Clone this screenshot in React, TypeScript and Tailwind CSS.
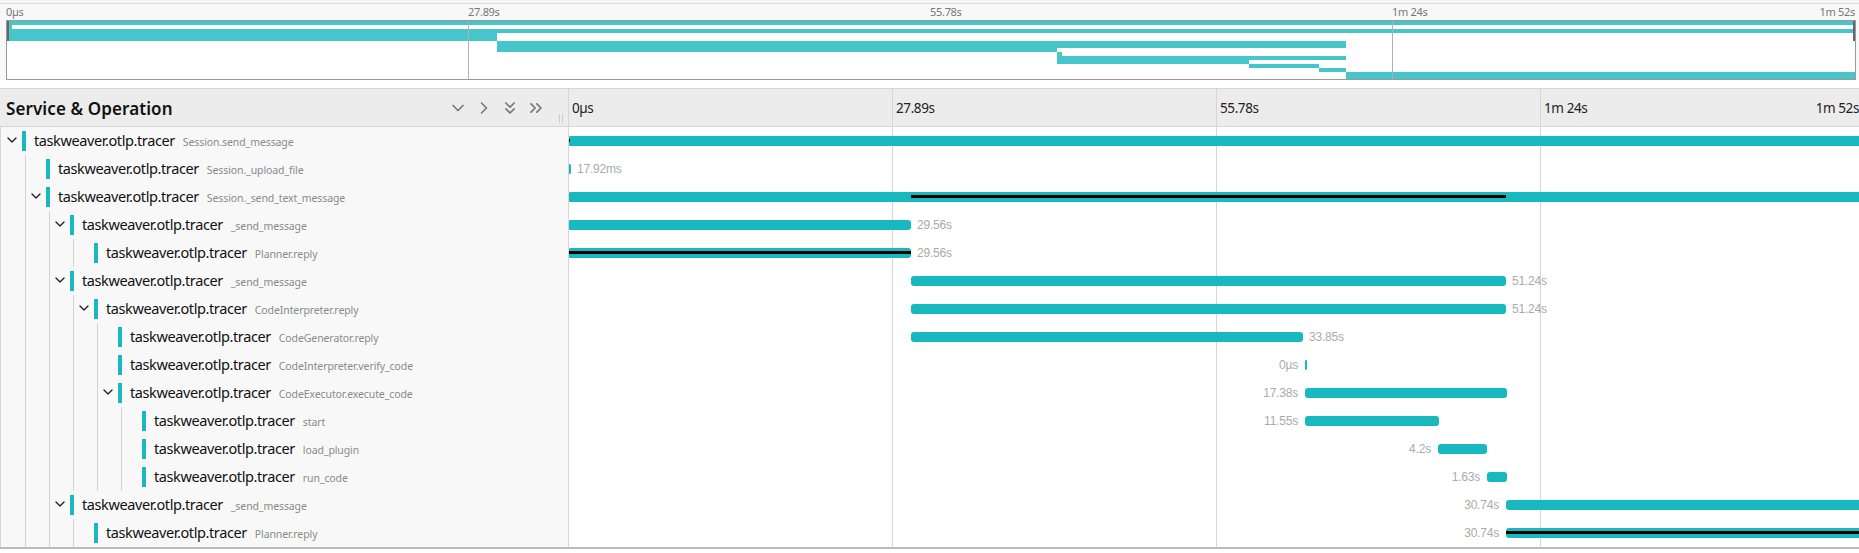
import React from 'react';
import { ChevronDown, ChevronRight, ChevronsDown, ChevronsRight } from 'lucide-react';

interface Span {
    depth: number;
    op: string;
    parent?: boolean;
    start: number;
    end: number;
    label?: string;
    labelLeft?: boolean;
    black?: [number, number];
}

// start / end are page x positions of the bar
const spans: Span[] = [
    { depth: 0, op: 'Session.send_message', parent: true, start: 568, end: 1870, black: [568, 570] },
    { depth: 1, op: 'Session._upload_file', start: 568, end: 571, label: '17.92ms' },
    { depth: 1, op: 'Session._send_text_message', parent: true, start: 568, end: 1870, black: [911, 1506] },
    { depth: 2, op: '_send_message', parent: true, start: 568, end: 911, label: '29.56s' },
    { depth: 3, op: 'Planner.reply', start: 568, end: 911, label: '29.56s', black: [568, 911] },
    { depth: 2, op: '_send_message', parent: true, start: 911, end: 1506, label: '51.24s' },
    { depth: 3, op: 'CodeInterpreter.reply', parent: true, start: 911, end: 1506, label: '51.24s' },
    { depth: 4, op: 'CodeGenerator.reply', start: 911, end: 1303, label: '33.85s' },
    { depth: 4, op: 'CodeInterpreter.verify_code', start: 1305, end: 1307, label: '0µs', labelLeft: true },
    { depth: 4, op: 'CodeExecutor.execute_code', parent: true, start: 1305, end: 1507, label: '17.38s', labelLeft: true },
    { depth: 5, op: 'start', start: 1305, end: 1439, label: '11.55s', labelLeft: true },
    { depth: 5, op: 'load_plugin', start: 1438, end: 1487, label: '4.2s', labelLeft: true },
    { depth: 5, op: 'run_code', start: 1487, end: 1507, label: '1.63s', labelLeft: true },
    { depth: 2, op: '_send_message', parent: true, start: 1506, end: 1870, label: '30.74s', labelLeft: true },
    { depth: 3, op: 'Planner.reply', start: 1506, end: 1870, label: '30.74s', labelLeft: true, black: [1506, 1870] },
];

// minimap bars in svg coords: row index, x1, x2
const miniBars: [number, number, number][] = [
    [0, 0, 1849],
    [1, 0, 5],
    [2, 0, 1849],
    [3, 0, 490],
    [4, 0, 490],
    [5, 490, 1340],
    [6, 490, 1340],
    [7, 490, 1051],
    [8, 1051, 1056],
    [9, 1051, 1340],
    [10, 1051, 1243],
    [11, 1243, 1313],
    [12, 1313, 1340],
    [13, 1340, 1849],
    [14, 1340, 1849],
];

const TimelineOrigin = 569;

const Minimap = () => (
    <svg className="block w-full h-full" viewBox="0 0 1849 58" preserveAspectRatio="none" shapeRendering="crispEdges">
        {miniBars.map(([row, x1, x2], i) => (
            <rect key={i} x={x1} y={row * 3.9} width={x2 - x1} height={3.9} fill="#46c6cb" />
        ))}
        <rect x={461} y={0} width={1} height={58} fill="#b0b0b0" />
        <rect x={924} y={0} width={1} height={58} fill="#a6a6a6" />
        <rect x={1386} y={0} width={1} height={58} fill="#b0b0b0" />
        <rect x={0} y={0} width={2} height={20} fill="#666" />
        <rect x={1847} y={0} width={2} height={20} fill="#666" />
    </svg>
);

const SpanName = ({ span }: { span: Span }) => (
    <div className="flex h-7 pl-[1px]">
        {Array.from({ length: span.depth }).map((_, i) => (
            <div key={i} className="w-6 h-full shrink-0 border-r border-[#d4d4d4]" />
        ))}
        <div className="w-5 shrink-0 flex items-center justify-center pr-[1px] pb-[3px]">
            {span.parent && <ChevronDown className="w-4 h-4 text-[#222]" strokeWidth={2} />}
        </div>
        <div className="w-1 h-5 my-1 shrink-0 bg-[#17b8be]" />
        <div className="ml-2 flex items-baseline whitespace-nowrap leading-[27px]">
            <span className="text-[14.5px] text-[#111] tracking-[-0.4px]">taskweaver.otlp.tracer</span>
            <span className="ml-2 text-[10.5px] text-[#8a8a8a] tracking-[-0.1px]">{span.op}</span>
        </div>
    </div>
);

const SpanBar = ({ span }: { span: Span }) => {
    const left = span.start - TimelineOrigin;
    const width = span.end - span.start;
    return (
        <div className="relative h-7 font-['Liberation_Sans',sans-serif]">
            <div className="absolute top-[9px] h-[10px] bg-[#17b8be] rounded-[3px] overflow-hidden" style={{ left, width }}>
                {span.black && (
                    <div
                        className="absolute top-[3px] h-[3px] bg-black"
                        style={{ left: span.black[0] - span.start, width: span.black[1] - span.black[0] }}
                    />
                )}
            </div>
            {span.label && !span.labelLeft && (
                <span className="absolute top-[7px] text-xs tracking-[-0.2px] text-[#aaa] leading-[14px]" style={{ left: span.end - TimelineOrigin + 6 }}>
                    {span.label}
                </span>
            )}
            {span.label && span.labelLeft && (
                <span className="absolute top-[7px] text-xs tracking-[-0.2px] text-[#aaa] leading-[14px]" style={{ right: 1859 - span.start + 7 }}>
                    {span.label}
                </span>
            )}
        </div>
    );
};

const App: React.FC = () => {
    return (
        <div className="w-[1859px] h-[553px] overflow-hidden bg-white font-['Noto_Sans',sans-serif]">
            <div className="h-1 bg-[#f3f3f3] border-b border-[#ddd]" />
            <div className="bg-[#f8f8f8]">
                <div className="flex h-4 pl-[6px] pr-[4px] text-[11px] leading-[16px] text-[#777] tracking-[-0.3px]">
                    <div className="w-[462px]">0µs</div>
                    <div className="w-[462px]">27.89s</div>
                    <div className="w-[462px]">55.78s</div>
                    <div className="flex-1 flex justify-between">
                        <span>1m 24s</span>
                        <span>1m 52s</span>
                    </div>
                </div>
                <div className="ml-[6px] mr-[3px] h-[60px] bg-white border border-[#999]">
                    <Minimap />
                </div>
            </div>

            <div className="h-2" />

            <div className="flex h-[39px] bg-[#ececec] border-t border-b border-[#d6d6d6]">
                <div className="relative w-[569px] shrink-0 flex items-center border-r border-[#d6d6d6] pl-[6px]">
                    <span className="text-[17px] font-semibold text-[#111] tracking-[0.1px] pt-[3px]">Service &amp; Operation</span>
                    <div className="absolute right-[22px] top-[9px] flex items-center gap-[6px] text-[#777]">
                        <ChevronDown className="w-5 h-5" strokeWidth={2} />
                        <ChevronRight className="w-5 h-5" strokeWidth={2} />
                        <ChevronsDown className="w-5 h-5" strokeWidth={2} />
                        <ChevronsRight className="w-5 h-5" strokeWidth={2} />
                    </div>
                    <div className="absolute right-[5px] top-[25px] flex gap-[2px]">
                        <div className="w-[1px] h-[9px] bg-[#ccc]" />
                        <div className="w-[1px] h-[9px] bg-[#ccc]" />
                    </div>
                </div>
                <div className="flex flex-1 items-center text-[13.5px] text-[#222] tracking-[-0.4px] min-w-0">
                    <div className="w-[324px] h-full flex items-center pl-[3px] pt-[1px] border-r border-[#d6d6d6]">0µs</div>
                    <div className="w-[324px] h-full flex items-center pl-[3px] pt-[1px] border-r border-[#d6d6d6]">27.89s</div>
                    <div className="w-[324px] h-full flex items-center pl-[3px] pt-[1px] border-r border-[#d6d6d6]">55.78s</div>
                    <div className="flex-1 h-full flex items-center justify-between pl-[3px] pt-[1px]">
                        <span>1m 24s</span>
                        <span>1m 52s</span>
                    </div>
                </div>
            </div>

            <div className="flex border-b-2 border-[#bbb]">
                <div className="w-[569px] shrink-0 bg-[#f8f8f8] border-l border-r border-[#d6d6d6] ml-0">
                    {spans.map((span, i) => (
                        <SpanName key={i} span={span} />
                    ))}
                </div>
                <div className="relative flex-1 min-w-0 overflow-hidden">
                    <div className="absolute inset-0 flex">
                        <div className="w-[324px] border-r border-[#d6d6d6]" />
                        <div className="w-[324px] border-r border-[#d6d6d6]" />
                        <div className="w-[324px] border-r border-[#d6d6d6]" />
                    </div>
                    {spans.map((span, i) => (
                        <SpanBar key={i} span={span} />
                    ))}
                </div>
            </div>
        </div>
    );
};

export default App;
